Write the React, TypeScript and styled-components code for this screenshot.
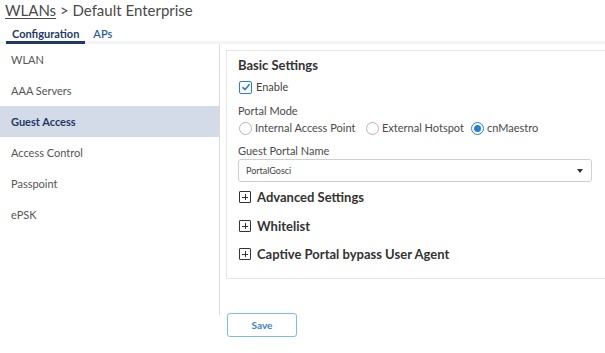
import React from "react";
import styled, { createGlobalStyle } from "styled-components";

const Global = createGlobalStyle`
  html, body { margin: 0; padding: 0; background: #fff; }
  body { font-family: Lato, "Open Sans", sans-serif; color: #444; }
  * { box-sizing: border-box; }
`;

const Page = styled.div`
  width: 605px;
  height: 353px;
  overflow: hidden;
  display: flex;
  flex-direction: column;
`;

const Title = styled.div`
  height: 21px;
  padding-left: 5px;
  font-size: 15px;
  line-height: 20px;
  color: #4a4a4a;
  white-space: nowrap;
`;

const Crumb = styled.span`
  text-decoration: underline;
  text-decoration-thickness: 1px;
  text-underline-offset: 2px;
`;

const TabBar = styled.div`
  display: flex;
  padding-left: 6px;
  height: 23px;
  border-bottom: 3px solid #f2f4f8;
  align-items: stretch;
`;

const Tab = styled.div<{ $active?: boolean }>`
  padding: 6px 6px 0;
  margin-right: 2px;
  font-size: 11px;
  font-weight: ${(p) => (p.$active ? 700 : 600)};
  color: ${(p) => (p.$active ? "#1e3a68" : "#2e5c9e")};
  border-bottom: 3px solid ${(p) => (p.$active ? "#1e3a68" : "transparent")};
  margin-bottom: -3px;
  line-height: 14px;
`;

const Body = styled.div`
  display: flex;
  flex: 1;
  min-height: 0;
`;

const Sidebar = styled.div`
  flex: 0 0 220px;
  width: 220px;
  height: 271px;
  border-right: 1px solid #dcdcdc;
  display: flex;
  flex-direction: column;
`;

const NavItem = styled.div<{ $active?: boolean }>`
  height: 31px;
  display: flex;
  align-items: center;
  padding-left: 11px;
  font-size: 11px;
  font-weight: ${(p) => (p.$active ? 700 : 400)};
  color: ${(p) => (p.$active ? "#1e3a68" : "#555")};
  background: ${(p) => (p.$active ? "#d3dbe8" : "transparent")};
`;

const Main = styled.div`
  flex: 1;
  min-width: 0;
  overflow: hidden;
  display: flex;
  flex-direction: column;
  padding: 6px 0 0 6px;
`;

const Card = styled.div`
  width: 390px;
  flex: 0 0 229px;
  border: 1px solid #e6e6e6;
  border-right: none;
  padding: 6px 0 0 11px;
  display: flex;
  flex-direction: column;
`;

const SectionTitle = styled.div`
  font-size: 13px;
  font-weight: 700;
  color: #333;
  line-height: 16px;
`;

const CheckRow = styled.label`
  display: flex;
  align-items: center;
  gap: 4px;
  margin-top: 7px;
  font-size: 11px;
  color: #444;
  line-height: 14px;
`;

const CheckBox = styled.span`
  width: 13px;
  height: 13px;
  border: 1px solid #2a7fd4;
  border-radius: 2px;
  margin-left: 1px;
  display: flex;
  align-items: center;
  justify-content: center;
  background: #fff;
`;

const FieldLabel = styled.div<{ $mt: number }>`
  margin-top: ${(p) => p.$mt}px;
  font-size: 11px;
  color: #4a4a4a;
  line-height: 14px;
`;

const RadioRow = styled.div`
  display: flex;
  align-items: center;
  margin-top: 3px;
  font-size: 11px;
  color: #4a4a4a;
  line-height: 14px;
`;

const RadioOpt = styled.label<{ $w: number }>`
  display: flex;
  align-items: center;
  gap: 3px;
  width: ${(p) => p.$w}px;
`;

const RadioCircle = styled.span<{ $on?: boolean }>`
  width: 13px;
  height: 13px;
  border-radius: 50%;
  border: 1px solid ${(p) => (p.$on ? "#2a7fd4" : "#b5b5b5")};
  display: flex;
  align-items: center;
  justify-content: center;
  margin-left: 1px;
  &::after {
    content: "";
    width: 7px;
    height: 7px;
    border-radius: 50%;
    background: ${(p) => (p.$on ? "#2a7fd4" : "transparent")};
  }
`;

const Select = styled.div`
  margin-top: 1px;
  width: 354px;
  height: 23px;
  border: 1px solid #cfcfcf;
  border-radius: 3px;
  display: flex;
  align-items: center;
  justify-content: space-between;
  padding: 0 8px 0 7px;
  font-size: 9px;
  color: #444;
`;

const Caret = styled.span`
  width: 0;
  height: 0;
  border-left: 3.5px solid transparent;
  border-right: 3.5px solid transparent;
  border-top: 4px solid #333;
`;

const Expander = styled.div<{ $mt: number }>`
  display: flex;
  align-items: center;
  gap: 6px;
  margin-top: ${(p) => p.$mt}px;
  font-size: 13px;
  font-weight: 700;
  color: #333;
  line-height: 16px;
`;

const PlusBox = styled.span`
  width: 12px;
  height: 12px;
  border: 1px solid #333;
  border-radius: 1px;
  margin-left: 1px;
  position: relative;
  &::before, &::after {
    content: "";
    position: absolute;
    background: #333;
  }
  &::before { left: 2px; right: 2px; top: 4.5px; height: 1px; }
  &::after { top: 2px; bottom: 2px; left: 4.5px; width: 1px; }
`;

const SaveButton = styled.button`
  margin-top: 34px;
  margin-left: 1px;
  width: 70px;
  height: 24px;
  border: 1.5px solid #7dbdec;
  border-radius: 3px;
  background: #fff;
  color: #3a80c9;
  font-family: Lato, "Open Sans", sans-serif;
  font-size: 10px;
  font-weight: 700;
`;

export default function App() {
  return (
    <Page>
      <Global />
      <Title>
        <Crumb>WLANs</Crumb> &gt; Default Enterprise
      </Title>
      <TabBar>
        <Tab $active>Configuration</Tab>
        <Tab>APs</Tab>
      </TabBar>
      <Body>
        <Sidebar>
          {["WLAN", "AAA Servers", "Guest Access", "Access Control", "Passpoint", "ePSK"].map((n) => (
            <NavItem key={n} $active={n === "Guest Access"}>{n}</NavItem>
          ))}
        </Sidebar>
        <Main>
          <Card>
            <SectionTitle>Basic Settings</SectionTitle>
            <CheckRow>
              <CheckBox>
                <svg width="10" height="10" viewBox="0 0 10 10">
                  <path d="M1.5 5.2 L4 7.6 L8.6 2.2" fill="none" stroke="#2a7fd4" strokeWidth="1.6" />
                </svg>
              </CheckBox>
              Enable
            </CheckRow>
            <FieldLabel $mt={10}>Portal Mode</FieldLabel>
            <RadioRow>
              <RadioOpt $w={127}><RadioCircle />Internal Access Point</RadioOpt>
              <RadioOpt $w={105}><RadioCircle />External Hotspot</RadioOpt>
              <RadioOpt $w={90}><RadioCircle $on />cnMaestro</RadioOpt>
            </RadioRow>
            <FieldLabel $mt={9}>Guest Portal Name</FieldLabel>
            <Select>
              PortalGosci
              <Caret />
            </Select>
            <Expander $mt={7}><PlusBox />Advanced Settings</Expander>
            <Expander $mt={13}><PlusBox />Whitelist</Expander>
            <Expander $mt={12}><PlusBox />Captive Portal bypass User Agent</Expander>
          </Card>
          <SaveButton>Save</SaveButton>
        </Main>
      </Body>
    </Page>
  );
}
